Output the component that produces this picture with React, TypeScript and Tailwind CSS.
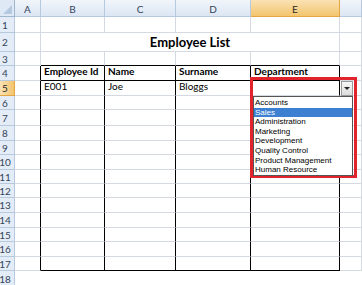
import React from "react";

const colWidths = [26, 64, 71, 75, 89];
const colLetters = ["A", "B", "C", "D", "E", ""];
const rowHeights = [16, 19, 14, 15, 15, 14, 16, 15, 14, 15, 14, 14, 15, 15, 14, 15, 14];

const departments = [
  "Accounts",
  "Sales",
  "Administration",
  "Marketing",
  "Development",
  "Quality Control",
  "Product Management",
  "Human Resource",
];

const rowData: Record<number, string[]> = {
  4: ["Employee Id", "Name", "Surname", "Department"],
  5: ["E001", "Joe", "Bloggs", ""],
};

function Cell({ row, col, width }: { row: number; col: number; width?: number }) {
  const inTable = row >= 4 && row <= 17;
  const right = inTable && col <= 4 ? "border-r-black" : "border-r-[#d4d9e2]";
  const bottom =
    col >= 1 && col <= 4 && (row === 3 || row === 4 || row === 17)
      ? "border-b-black"
      : "border-b-[#d4d9e2]";
  const text = rowData[row]?.[col - 1] ?? "";
  return (
    <div
      className={`h-full shrink-0 border-r border-b ${right} ${bottom} flex items-end pl-[3px] pb-px overflow-hidden whitespace-nowrap ${
        row === 4 ? "font-bold" : "font-normal"
      } ${col === 5 ? "flex-1" : ""}`}
      style={width ? { width } : undefined}
    >
      {text}
    </div>
  );
}

export default function App() {
  return (
    <div className="relative w-[362px] h-[285px] overflow-hidden bg-white font-['Lato',sans-serif] text-[10px] text-black">
      {/* Column headers */}
      <div className="flex h-[17px]">
        <div className="w-[15px] shrink-0 border-r border-b border-[#9eb6ce] bg-[#dfe8f5] relative">
          <div className="absolute right-[2px] bottom-[2px] w-0 h-0 border-l-[9px] border-l-transparent border-b-[9px] border-b-[#b4c8e0]" />
        </div>
        {colLetters.map((l, i) => (
          <div
            key={i}
            className={`shrink-0 flex items-center justify-center pt-[3px] border-r border-b text-[10px] ${
              l === "E"
                ? "bg-gradient-to-b from-[#fae2b3] to-[#f3c56d] border-[#e2a646] text-[#2a2a2a]"
                : "bg-gradient-to-b from-[#f1f5fb] to-[#dce6f3] border-[#b7c9df] text-[#33445a]"
            } ${i === 5 ? "flex-1" : ""}`}
            style={i < 5 ? { width: colWidths[i] } : undefined}
          >
            {l}
          </div>
        ))}
      </div>

      {/* Rows */}
      {rowHeights.map((h, idx) => {
        const row = idx + 1;
        return (
          <div key={row} className="flex" style={{ height: h }}>
            <div
              className={`w-[15px] shrink-0 flex items-center justify-center pr-[4px] pt-px border-r border-b text-[10px] overflow-visible ${
                row === 5
                  ? "bg-gradient-to-r from-[#fae2b3] to-[#f3c56d] border-[#e2a646] text-[#2a2a2a]"
                  : "bg-[#e4ecf7] border-[#b7c9df] text-[#33445a]"
              }`}
            >
              {row}
            </div>
            <Cell row={row} col={0} width={colWidths[0]} />
            {row === 2 ? (
              <div className="w-[299px] shrink-0 h-full border-r border-b border-[#d4d9e2] flex items-center justify-center pt-[2px] font-bold text-[13px]">
                Employee List
              </div>
            ) : (
              <>
                <Cell row={row} col={1} width={colWidths[1]} />
                <Cell row={row} col={2} width={colWidths[2]} />
                <Cell row={row} col={3} width={colWidths[3]} />
                <Cell row={row} col={4} width={colWidths[4]} />
              </>
            )}
            <Cell row={row} col={5} />
          </div>
        );
      })}
      <div className="flex h-[20px]">
        <div className="w-[15px] shrink-0 border-r border-[#b7c9df] bg-[#e4ecf7] flex justify-center pr-[4px] pt-px text-[10px] text-[#33445a]">
          18
        </div>
      </div>

      {/* Data validation dropdown */}
      <div className="absolute left-[250px] top-[77px] w-[107px] h-[101px] border-[3px] border-[#e1232b]" />
      <div className="absolute left-[341px] top-[81px] w-[12px] h-[15px] border border-[#9a9a9a] bg-gradient-to-b from-[#f7f7f7] to-[#dcdcdc] flex items-center justify-center">
        <div className="w-0 h-0 border-l-[3px] border-r-[3px] border-t-[3px] border-l-transparent border-r-transparent border-t-[#222]" />
      </div>
      <div className="absolute left-[253px] top-[96px] w-[100px] h-[80px] bg-white border border-[#555] pt-px font-['Liberation_Sans',sans-serif] text-[8px] leading-[9.6px]">
        {departments.map((d) => (
          <div
            key={d}
            className={`h-[9.6px] pl-px whitespace-nowrap ${d === "Sales" ? "bg-[#3d7fd1] text-white" : "text-black"}`}
          >
            {d}
          </div>
        ))}
      </div>
    </div>
  );
}
